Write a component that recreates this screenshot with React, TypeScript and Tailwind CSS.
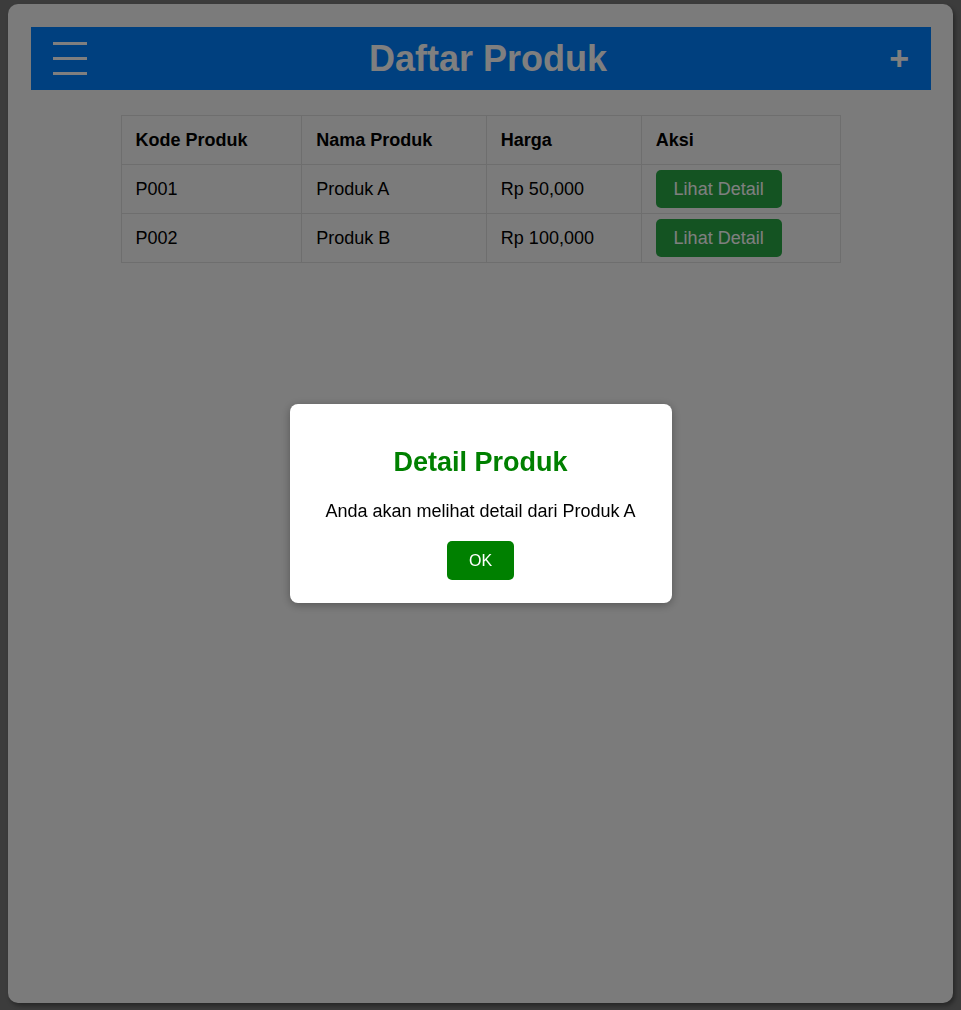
import { useState } from "react";

type Produk = {
    kode: string;
    nama: string;
    harga: string;
};

const produkList: Array<Produk> = [
    { kode: "P001", nama: "Produk A", harga: "Rp 50,000" },
    { kode: "P002", nama: "Produk B", harga: "Rp 100,000" },
];

const Header = () => {
    return (
        <div className="flex h-[63px] w-[900px] items-center justify-between bg-[#0080ff] px-[22px]">
            <div className="flex w-[34px] flex-col gap-[12px]">
                <span className="h-[3px] w-full bg-white" />
                <span className="h-[3px] w-full bg-white" />
                <span className="h-[3px] w-full bg-white" />
            </div>
            <h1 className="text-[36px] font-bold leading-none text-white">Daftar Produk</h1>
            <span className="pb-[1px] text-[34px] font-bold leading-none text-white">+</span>
        </div>
    );
};

const ProdukTable = ({ onDetail }: { onDetail: (p: Produk) => void }) => {
    const cell = "h-[49px] border border-[#dddddd] px-[14px] py-0 text-left align-middle";
    return (
        <table className="mx-auto mt-[25px] w-[720px] border-collapse text-[18px] text-black">
            <thead>
                <tr>
                    <th className={`${cell} w-[181px] font-bold`}>Kode Produk</th>
                    <th className={`${cell} w-[185px] font-bold`}>Nama Produk</th>
                    <th className={`${cell} w-[155px] font-bold`}>Harga</th>
                    <th className={`${cell} w-[199px] font-bold`}>Aksi</th>
                </tr>
            </thead>
            <tbody>
                {produkList.map((p) => {
                    return (
                        <tr key={p.kode}>
                            <td className={cell}>{p.kode}</td>
                            <td className={cell}>{p.nama}</td>
                            <td className={cell}>{p.harga}</td>
                            <td className={cell}>
                                <button
                                    className="flex h-[38px] w-[126px] items-center justify-center rounded-[5px] bg-[#28a745] text-[18px] text-white"
                                    onClick={() => onDetail(p)}
                                >
                                    Lihat Detail
                                </button>
                            </td>
                        </tr>
                    );
                })}
            </tbody>
        </table>
    );
};

const Modal = ({ produk, onClose }: { produk: Produk; onClose: () => void }) => {
    return (
        <div className="fixed inset-0 z-10 flex items-center justify-center bg-[rgba(0,0,0,0.5)] pb-[3px]">
            <div className="flex w-[382px] flex-col items-center rounded-[8px] bg-white pt-[43px] pb-[23px] shadow-[0_2px_10px_rgba(0,0,0,0.3)]">
                <h2 className="text-[27px] font-bold leading-[30px] text-[#008000]">Detail Produk</h2>
                <p className="mt-[24px] text-[18px] leading-[21px] text-black">
                    Anda akan melihat detail dari {produk.nama}
                </p>
                <button
                    className="mt-[19px] flex h-[39px] w-[67px] items-center justify-center rounded-[5px] bg-[#008000] text-[16px] text-white"
                    onClick={onClose}
                >
                    OK
                </button>
            </div>
        </div>
    );
};

export default function App() {
    const [selected, setSelected] = useState<Produk | null>(produkList[0]);

    return (
        <div
            className="h-[1010px] w-full overflow-hidden bg-[#787878] pt-[4px] pl-[8px]"
            style={{ fontFamily: '"Liberation Sans", Arial, sans-serif' }}
        >
            <div className="h-[999px] w-[945px] rounded-[10px] bg-[#f6f6f6] px-[23px] pt-[23px] shadow-[2px_3px_4px_rgba(0,0,0,0.35)]">
                <Header />
                <ProdukTable onDetail={(p) => setSelected(p)} />
            </div>
            {selected && <Modal produk={selected} onClose={() => setSelected(null)} />}
        </div>
    );
}
